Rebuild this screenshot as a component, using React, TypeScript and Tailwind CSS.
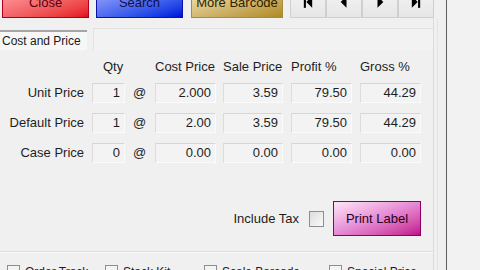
import React from "react";

const ff = "font-['Liberation_Sans','Arial',sans-serif]";

function Field({ value, w }: { value: string; w: string }) {
  return (
    <div
      className={`${w} flex h-[20px] items-center justify-end border border-t-[#d6d6d6] border-l-[#dcdcdc] border-b-[#fbfbfb] border-r-[#fbfbfb] bg-[#f3f3f3] pr-[4px] text-[13px] text-[#1e1e1e]`}
    >
      {value}
    </div>
  );
}

function NavIcon({ kind }: { kind: "first" | "prev" | "next" | "last" }) {
  return (
    <svg width="10" height="12" viewBox="0 0 12 14">
      {kind === "first" && (
        <>
          <rect x="1" y="0" width="2.5" height="14" fill="#000" />
          <path d="M11 0 L4 7 L11 14 Z" fill="#000" />
        </>
      )}
      {kind === "prev" && <path d="M9 0 L2 7 L9 14 Z" fill="#000" />}
      {kind === "next" && <path d="M3 0 L10 7 L3 14 Z" fill="#000" />}
      {kind === "last" && (
        <>
          <path d="M1 0 L8 7 L1 14 Z" fill="#000" />
          <rect x="8.5" y="0" width="2.5" height="14" fill="#000" />
        </>
      )}
    </svg>
  );
}

const rows = [
  { label: "Unit Price", qty: "1", cost: "2.000", sale: "3.59", profit: "79.50", gross: "44.29" },
  { label: "Default Price", qty: "1", cost: "2.00", sale: "3.59", profit: "79.50", gross: "44.29" },
  { label: "Case Price", qty: "0", cost: "0.00", sale: "0.00", profit: "0.00", gross: "0.00" },
];

const bottomChecks = [
  { w: "w-[98px]", text: "Order Track" },
  { w: "w-[99px]", text: "Stock Kit" },
  { w: "w-[125px]", text: "Scale Barcode" },
  { w: "w-[100px]", text: "Special Price" },
];

export default function App() {
  return (
    <div className={`flex h-[270px] w-[480px] overflow-hidden bg-[#f0f0f0] ${ff}`}>
      <div className="flex w-[446px] flex-col">
        {/* toolbar buttons, partly scrolled off the top */}
        <div className="-mt-[12px] flex h-[30px] shrink-0 pl-[2px]">
          <div className="flex h-full w-[87px] justify-center border border-[#b00018] bg-linear-to-br from-[#ffa0ac] to-[#e4001c] pt-[6px] text-[13px] leading-[16px] text-[#5a0010]">
            Close
          </div>
          <div className="ml-[7px] flex h-full w-[87px] justify-center border border-[#1010a8] bg-linear-to-br from-[#a8a8ff] to-[#0000dc] pt-[6px] text-[13px] leading-[16px] text-[#10104a]">
            Search
          </div>
          <div className="ml-[8px] flex h-full w-[92px] justify-center border border-[#a88a40] bg-linear-to-br from-[#f6e8b8] to-[#b08a1c] pt-[6px] text-[13px] leading-[16px] text-[#2e2200]">
            More Barcode
          </div>
          <div className="ml-[7px] flex h-full">
            {(["first", "prev", "next", "last"] as const).map((k) => (
              <div
                key={k}
                className="flex h-full w-[36px] justify-center border border-[#cfcfcf] bg-linear-to-b from-[#f4f4f4] to-[#e6e6e6] pt-[7px]"
              >
                <NavIcon kind={k} />
              </div>
            ))}
          </div>
        </div>

        <div className="flex flex-1">
          <div className="flex w-[434px] flex-col border-r border-[#dcdcdc]">
            {/* tab strip */}
            <div className="mt-[10px] flex h-[22px] shrink-0">
              <div className="mt-[2px] flex w-[87px] items-center whitespace-nowrap border-t-2 border-[#a6a6a6] bg-[#f7f7f7] pl-[2px] text-[12px] text-[#1a1a1a]">
                Cost and Price
              </div>
              <div className="ml-[6px] flex-1 border-l border-t border-[#e2e2e2] bg-[#f2f2f2]" />
            </div>

            {/* header */}
            <div className="mt-[9px] flex h-[16px] items-center text-[13px] text-[#1e1e1e]">
              <div className="w-[103px]" />
              <div className="w-[52px]">Qty</div>
              <div className="w-[68px]">Cost Price</div>
              <div className="w-[68px]">Sale Price</div>
              <div className="w-[69px]">Profit %</div>
              <div>Gross %</div>
            </div>

            <div className="mt-[8px] flex flex-col gap-[10px]">
              {rows.map((r) => (
                <div key={r.label} className="flex h-[20px] items-center text-[13px] text-[#1e1e1e]">
                  <div className="w-[84px] text-right">{r.label}</div>
                  <div className="ml-[8px]">
                    <Field value={r.qty} w="w-[33px]" />
                  </div>
                  <div className="w-[30px] pl-[8px]">@</div>
                  <Field value={r.cost} w="w-[61px]" />
                  <div className="ml-[7px]">
                    <Field value={r.sale} w="w-[60px]" />
                  </div>
                  <div className="ml-[8px]">
                    <Field value={r.profit} w="w-[61px]" />
                  </div>
                  <div className="ml-[8px]">
                    <Field value={r.gross} w="w-[61px]" />
                  </div>
                </div>
              ))}
            </div>

            {/* include tax + print label */}
            <div className="mt-[38px] flex items-center justify-end pr-[12px]">
              <span className="text-[13px] text-[#1e1e1e]">Include Tax</span>
              <div className="ml-[10px] h-[16px] w-[15px] border border-[#8e8e8e] bg-linear-to-br from-[#dcdcdc] to-[#fafafa]" />
              <div className="ml-[9px] flex h-[35px] w-[88px] items-center justify-center border border-[#8c0064] bg-linear-to-br from-[#fde6f7] via-[#e58ad4] to-[#c0008c] text-[13px] text-[#2a0020]">
                Print Label
              </div>
            </div>

            {/* separator + bottom checkboxes */}
            <div className="mt-[15px] h-px bg-[#dddddd]" />
            <div className="h-px bg-[#fbfbfb]" />
            <div className="mt-[12px] flex items-start pl-[7px] text-[12px] leading-[14px] text-[#1e1e1e]">
              {bottomChecks.map((c) => (
                <div key={c.text} className={`${c.w} flex shrink-0 items-start whitespace-nowrap`}>
                  <div className="h-[13px] w-[13px] shrink-0 border border-[#8e8e8e] bg-[#f4f4f4]" />
                  <span className="ml-[5px]">{c.text}</span>
                </div>
              ))}
            </div>
          </div>
          <div className="ml-[3px] w-px bg-[#e4e4e4]" />
        </div>
      </div>
      <div className="w-px bg-[#5e5e5e]" />
      <div className="flex-1 bg-[#f2f2f2]" />
    </div>
  );
}
